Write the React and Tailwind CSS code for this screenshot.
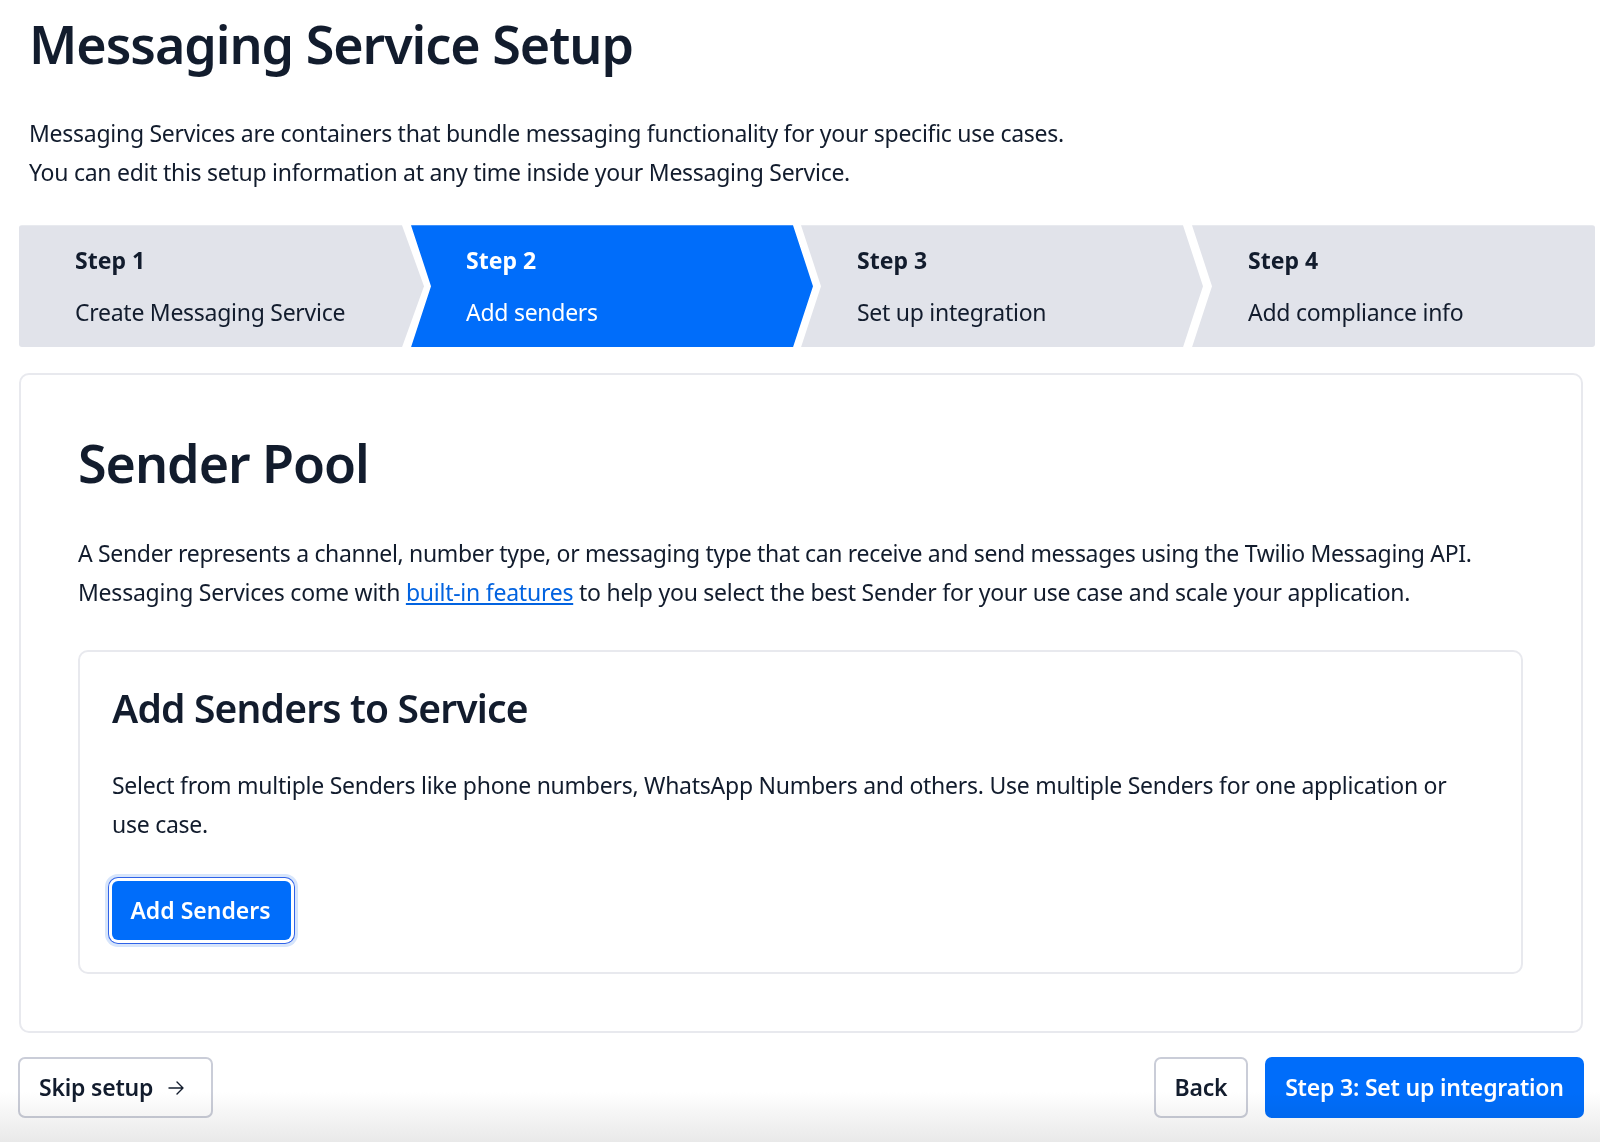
import React from "react";

const steps = [
  { t: "Step 1", s: "Create Messaging Service", cls: "w-[405px] pl-[56px] rounded-l-[3px] bg-[#e1e3ea] text-[#121c2d] [clip-path:polygon(0_0,383px_0,405px_50%,383px_100%,0_100%)]" },
  { t: "Step 2", s: "Add senders", cls: "w-[402px] -ml-[13px] pl-[55px] bg-[#006dfa] text-white [clip-path:polygon(0_0,382px_0,402px_50%,382px_100%,0_100%,20px_50%)]" },
  { t: "Step 3", s: "Set up integration", cls: "w-[402px] -ml-[12px] pl-[56px] bg-[#e1e3ea] text-[#121c2d] [clip-path:polygon(0_0,382px_0,402px_50%,382px_100%,0_100%,20px_50%)]" },
  { t: "Step 4", s: "Add compliance info", cls: "w-[403px] -ml-[11px] pl-[56px] rounded-r-[3px] bg-[#e1e3ea] text-[#121c2d] [clip-path:polygon(0_0,100%_0,100%_100%,0_100%,20px_50%)]" },
];

export default function App() {
  return (
    <div className="relative h-[1142px] w-[1600px] overflow-hidden bg-white font-['Noto_Sans',sans-serif] text-[#121c2d]">
      <div className="flex h-full flex-col pl-[19px]">
        <h1 className="ml-[10px] mt-[8px] text-[52px] font-semibold leading-[72px] tracking-[-1.03px]">Messaging Service Setup</h1>
        <div className="ml-[10px] mt-[34px] text-[23px] leading-[38.6px] tracking-[-0.27px]">
          <p>Messaging Services are containers that bundle messaging functionality for your specific use cases.</p>
          <p>You can edit this setup information at any time inside your Messaging Service.</p>
        </div>
        <div className="mt-[34px] flex h-[122px]">
          {steps.map((x) => (
            <div key={x.t} className={`flex flex-col justify-center ${x.cls}`}>
              <div className="text-[23px] font-bold leading-[38px]">{x.t}</div>
              <div className="mt-[14px] text-[23px] leading-[38px] tracking-[-0.27px]">{x.s}</div>
            </div>
          ))}
        </div>
        <section className="mt-[26px] h-[660px] w-[1564px] rounded-[10px] border-2 border-[#e8e9ee] pl-[57px] pr-[58px] pt-[52px]">
          <h2 className="text-[52px] font-semibold leading-[72px] tracking-[-1.03px]">Sender Pool</h2>
          <div className="mt-[35px] text-[23px] leading-[38.6px]">
            <p className="tracking-[-0.33px]">A Sender represents a channel, number type, or messaging type that can receive and send messages using the Twilio Messaging API.</p>
            <p className="tracking-[-0.24px]">Messaging Services come with <a className="text-[#0263e0] underline" href="#">built-in features</a> to help you select the best Sender for your use case and scale your application.</p>
          </div>
          <div className="mt-[39px] h-[324px] w-[1445px] rounded-[10px] border-2 border-[#e8e9ee] px-[32px] pt-[28px]">
            <h3 className="text-[39px] font-semibold leading-[56px] tracking-[-0.82px]">Add Senders to Service</h3>
            <p className="mt-[30px] max-w-[1350px] text-[23px] leading-[38.6px] tracking-[-0.26px]">
              Select from multiple Senders like phone numbers, WhatsApp Numbers and others. Use multiple Senders for one application or use case.
            </p>
            <button className="mt-[37px] h-[59px] w-[179px] rounded-[6px] bg-[#006dfa] pr-[2px] text-[23px] font-semibold text-white shadow-[0_0_0_3px_#fff,0_0_0_4px_#2f62e8,0_0_0_7px_#d7e5fb]">Add Senders</button>
          </div>
        </section>
        <div className="mt-[24px] flex w-[1566px] -ml-px items-start justify-between">
          <button className="flex h-[61px] w-[195px] items-center gap-[15px] rounded-[7px] border-2 border-[#cacdd8] bg-white pl-[19px] text-[23px] font-semibold tracking-[-0.2px]">
            Skip setup
            <svg width="16" height="14" viewBox="0 0 16 14" fill="none" stroke="currentColor" strokeWidth="1.4" strokeLinecap="round" strokeLinejoin="round">
              <path d="M1 7h14M9 1l6 6-6 6" />
            </svg>
          </button>
          <div className="flex gap-[17px]">
            <button className="h-[61px] w-[94px] rounded-[7px] border-2 border-[#cacdd8] bg-white text-[23px] font-semibold tracking-[-0.2px]">Back</button>
            <button className="h-[61px] w-[319px] rounded-[7px] bg-[#006dfa] text-[23px] font-semibold tracking-[-0.2px] text-white">Step 3: Set up integration</button>
          </div>
        </div>
      </div>
      <div className="pointer-events-none absolute inset-x-0 bottom-0 h-[50px] bg-gradient-to-b from-white to-[#e9e9e9] mix-blend-multiply" />
    </div>
  );
}
